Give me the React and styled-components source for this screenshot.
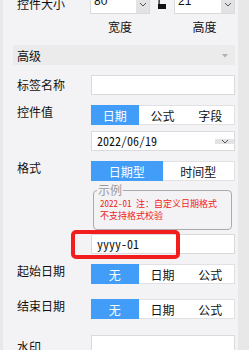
import React from 'react'
import styled, { createGlobalStyle } from 'styled-components'

const GlobalStyle = createGlobalStyle`
  html, body {
    margin: 0;
    padding: 0;
  }
  body {
    width: 249px;
    height: 350px;
    overflow: hidden;
    background: #e8e8e8;
    font-family: "Noto Sans CJK SC", "Noto Sans", sans-serif;
    font-size: 12px;
    color: #111;
  }
`

const Frame = styled.div`
  display: flex;
  height: 350px;
  padding-left: 3px;
  overflow: hidden;
`

const Panel = styled.div`
  width: 235px;
  background: #f3f3f5;
  overflow: hidden;
`

const Content = styled.div`
  display: flex;
  flex-direction: column;
  margin-top: -6px;
  padding: 0 3px 0 10px;
`

const Row = styled.div`
  position: relative;
  display: flex;
  align-items: ${p => (p.$top ? 'flex-start' : 'center')};
  height: 20px;
  margin-top: ${p => p.$mt || 0}px;
  padding-left: 4px;
`

const Label = styled.div`
  width: ${p => p.$w || 74}px;
  flex-shrink: 0;
  line-height: ${p => p.$lh || (p.$top ? 14 : 20)}px;
  white-space: nowrap;
`

const NumBox = styled.div`
  display: flex;
  height: 20px;
  box-sizing: border-box;
  width: ${p => (p.$w ? p.$w + 'px' : 'auto')};
  flex: ${p => (p.$w ? 'none' : '1')};
  background: #fff;
  border: 1px solid #dadada;
`

const NumText = styled.div`
  flex: 1;
  padding-left: 3px;
  font-family: "Liberation Sans", Arial, sans-serif;
  font-size: 12px;
  line-height: 12px;
`

const ArrowCell = styled.div`
  width: ${p => p.$w || 13}px;
  display: flex;
  align-items: center;
  justify-content: center;
  background: #e3e3e5;
`

const LockWrap = styled.div`
  width: 24px;
  height: 20px;
  display: flex;
  align-items: center;
  justify-content: center;
`

const CaptionRow = styled.div`
  display: flex;
  height: 14px;
  margin-top: 6px;
  padding-left: 4px;
  line-height: 14px;
`

const Caption = styled.div`
  width: ${p => (p.$w ? p.$w + 'px' : 'auto')};
  flex: ${p => (p.$w ? 'none' : '1')};
  text-align: ${p => (p.$center ? 'center' : 'left')};
`

const SectionHeader = styled.div`
  display: flex;
  align-items: center;
  justify-content: space-between;
  height: 20px;
  margin-top: 11px;
  padding: 0 6px 0 4px;
  background: #ebebec;
`

const TextInput = styled.div`
  flex: 1;
  height: 20px;
  box-sizing: border-box;
  background: #fff;
  border: 1px solid #dadadc;
  display: flex;
  align-items: center;
`

const MonoText = styled.div`
  flex: 1;
  padding-left: 5px;
  font-family: "Noto Sans Mono CJK SC", "DejaVu Sans Mono", monospace;
  font-size: 12px;
  line-height: 18px;
  color: #111;
`

const Segmented = styled.div`
  flex: 1;
  display: flex;
  height: 20px;
  background: #fff;
`

const Segment = styled.div`
  flex: 1;
  display: flex;
  align-items: center;
  justify-content: center;
  box-sizing: border-box;
  height: 20px;
  background: ${p => (p.$active ? '#419df7' : '#fff')};
  color: ${p => (p.$active ? '#fff' : '#111')};
  border-top: 1px solid ${p => (p.$active ? '#419df7' : '#e1e1e3')};
  border-bottom: 1px solid ${p => (p.$active ? '#419df7' : '#e1e1e3')};
  &:last-child {
    border-right: 1px solid #e1e1e3;
  }
`

const ExampleRow = styled.div`
  display: flex;
  margin-top: 3px;
  padding-left: 80px;
  padding-right: 3px;
`

const Example = styled.fieldset`
  flex: 1;
  margin: 0;
  padding: 2px 4px 7px 6px;
  border: 1px solid #aaaaac;
  border-radius: 4px;
  min-width: 0;
`

const Legend = styled.legend`
  margin-left: -3px;
  padding: 0 1px;
  font-size: 12px;
  line-height: 12px;
  color: #9a9a9a;
`

const Note = styled.div`
  font-family: "Noto Sans Mono CJK SC", "Noto Sans CJK SC", monospace;
  font-size: 9px;
  line-height: 12px;
  color: #f01c1c;
  white-space: nowrap;
`

const Highlight = styled.div`
  position: absolute;
  left: 58px;
  top: -4px;
  width: 109px;
  height: 29px;
  box-sizing: border-box;
  border: 4px solid #f21d1d;
  border-radius: 5px;
`

const Scrollbar = styled.div`
  flex: 1;
  background: #e8e8e8;
`

function Chevron() {
  return (
    <svg width="8" height="5" viewBox="0 0 8 5">
      <polyline points="1,1 4,4 7,1" fill="none" stroke="#555" strokeWidth="1" />
    </svg>
  )
}

function Lock() {
  return (
    <svg width="10" height="20" viewBox="0 0 10 20">
      <rect x="1" y="10" width="8" height="5" fill="#111" />
      <rect x="1.5" y="4" width="1.2" height="7" fill="#111" />
    </svg>
  )
}

function Caret() {
  return (
    <svg width="8" height="5" viewBox="0 0 8 5">
      <polygon points="1,1 7,1 4,4.5" fill="#b0b0b2" />
    </svg>
  )
}

function SegGroup({ items, active = 0 }) {
  return (
    <Segmented>
      {items.map((t, i) => (
        <Segment key={t} $active={i === active}>{t}</Segment>
      ))}
    </Segmented>
  )
}

export default function App() {
  return (
    <>
      <GlobalStyle />
      <Frame>
        <Panel>
          <Content>
            <Row>
              <Label $w={73}>控件大小</Label>
              <NumBox $w={60}>
                <NumText>80</NumText>
                <ArrowCell><Chevron /></ArrowCell>
              </NumBox>
              <LockWrap><Lock /></LockWrap>
              <NumBox>
                <NumText>21</NumText>
                <ArrowCell><Chevron /></ArrowCell>
              </NumBox>
            </Row>
            <CaptionRow>
              <Caption $w={73} />
              <Caption $w={60} $center>宽度</Caption>
              <Caption $w={24} />
              <Caption $center>高度</Caption>
            </CaptionRow>

            <SectionHeader>
              <span>高级</span>
              <Caret />
            </SectionHeader>

            <Row $mt={10}>
              <Label>标签名称</Label>
              <TextInput />
            </Row>

            <Row $mt={10} $top>
              <Label $top>控件值</Label>
              <SegGroup items={['日期', '公式', '字段']} />
            </Row>

            <Row $mt={6}>
              <Label />
              <TextInput>
                <MonoText>2022/06/19</MonoText>
                <ArrowCell $w={19}><Chevron /></ArrowCell>
              </TextInput>
            </Row>

            <Row $mt={10} $top>
              <Label $top>格式</Label>
              <SegGroup items={['日期型', '时间型']} />
            </Row>

            <ExampleRow>
              <Example>
                <Legend>示例</Legend>
                <Note>2022-01 注：自定义日期格式<br />不支持格式校验</Note>
              </Example>
            </ExampleRow>

            <Row $mt={4}>
              <Label />
              <TextInput>
                <MonoText>yyyy-01</MonoText>
              </TextInput>
              <Highlight />
            </Row>

            <Row $mt={10} $top>
              <Label $top>起始日期</Label>
              <SegGroup items={['无', '日期', '公式']} />
            </Row>

            <Row $mt={15} $top>
              <Label $top>结束日期</Label>
              <SegGroup items={['无', '日期', '公式']} />
            </Row>

            <Row $mt={16} $top>
              <Label $top $lh={24}>水印</Label>
              <TextInput />
            </Row>
          </Content>
        </Panel>
        <Scrollbar />
      </Frame>
    </>
  )
}
